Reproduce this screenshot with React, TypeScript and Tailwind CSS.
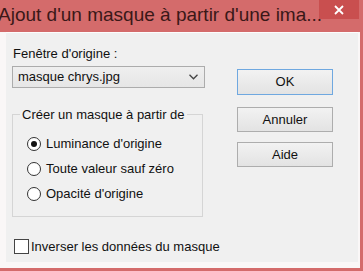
// Boîte de dialogue "Ajout d'un masque à partir d'une image"

const OPTIONS = ["Luminance d'origine", 'Toute valeur sauf zéro', "Opacité d'origine"];

function Radio({ label, checked }: { label: string; checked?: boolean }) {
  return (
    <div className="flex h-[25px] items-center">
      <span className="ml-[14px] flex h-[14px] w-[14px] shrink-0 items-center justify-center rounded-full border border-[#333] bg-white">
        {checked && <span className="h-[6px] w-[6px] rounded-full bg-[#111]" />}
      </span>
      <span className="ml-[5px]">{label}</span>
    </div>
  );
}

function Button({ label, primary }: { label: string; primary?: boolean }) {
  return (
    <button
      type="button"
      className={`flex w-[96px] items-center justify-center bg-gradient-to-b from-[#f2f2f2] to-[#e3e3e3] ${
        primary ? 'h-[26px] border border-[#6fa8e0]' : 'h-[25px] border border-[#adadad]'
      }`}
    >
      {label}
    </button>
  );
}

export default function App() {
  return (
    <div className="flex h-[271px] w-[363px] flex-col overflow-hidden bg-[#d46b6b] pb-[3px] pr-[3px] font-['Liberation_Sans',Arial,sans-serif] text-[13px] text-[#111]">
      {/* barre de titre */}
      <div className="relative h-[32px] shrink-0">
        <div className="ml-[-2px] whitespace-nowrap pt-[3px] text-[19px] leading-[24px] text-[#3a1818]">
          Ajout d'un masque à partir d'une ima...
        </div>
        <div className="absolute right-[1px] top-0 flex h-[19px] w-[40px] items-center justify-center bg-[#c94f4f]">
          <svg width="10" height="10" viewBox="0 0 10 10">
            <path d="M1 1 L9 9 M9 1 L1 9" stroke="white" strokeWidth="1.8" />
          </svg>
        </div>
      </div>

      <div className="flex flex-1 bg-[#faf7f7] pb-[6px] pl-[6px] pr-[2px]">
        <div className="flex flex-1 border-t border-[#fdfdfd] bg-[#f0f0f0]">
          {/* colonne gauche */}
          <div className="ml-[6px] flex w-[193px] flex-col whitespace-nowrap">
            <div className="mt-[13px] h-[15px] pl-[1px] leading-[15px]">Fenêtre d'origine :</div>
            <div className="mt-[5px] flex h-[22px] items-center justify-between border border-[#acacac] bg-gradient-to-b from-[#efefef] to-[#e6e6e6] pl-[5px] pr-[6px]">
              <span>masque chrys.jpg</span>
              <svg width="9" height="6" viewBox="0 0 9 6">
                <path d="M0.5 0.8 L4.5 4.8 L8.5 0.8" fill="none" stroke="#444" strokeWidth="1.3" />
              </svg>
            </div>

            <fieldset className="mt-[19px] h-[110px] w-[191px] border border-[#d5d5d5]">
              <legend className="ml-[7px] px-[2px] leading-[15px]">Créer un masque à partir de</legend>
              <div className="mt-[9px] flex flex-col">
                {OPTIONS.map((o, i) => (
                  <Radio key={o} label={o} checked={i === 0} />
                ))}
              </div>
            </fieldset>

            <div className="mt-[20px] flex items-center">
              <span className="ml-[2px] h-[15px] w-[15px] shrink-0 border border-[#444] bg-white" />
              <span className="ml-[2px]">Inverser les données du masque</span>
            </div>
          </div>

          {/* boutons */}
          <div className="ml-[32px] flex flex-col pt-[36px]">
            <Button label="OK" primary />
            <div className="mt-[12px]">
              <Button label="Annuler" />
            </div>
            <div className="mt-[10px]">
              <Button label="Aide" />
            </div>
          </div>
        </div>
      </div>
    </div>
  );
}
